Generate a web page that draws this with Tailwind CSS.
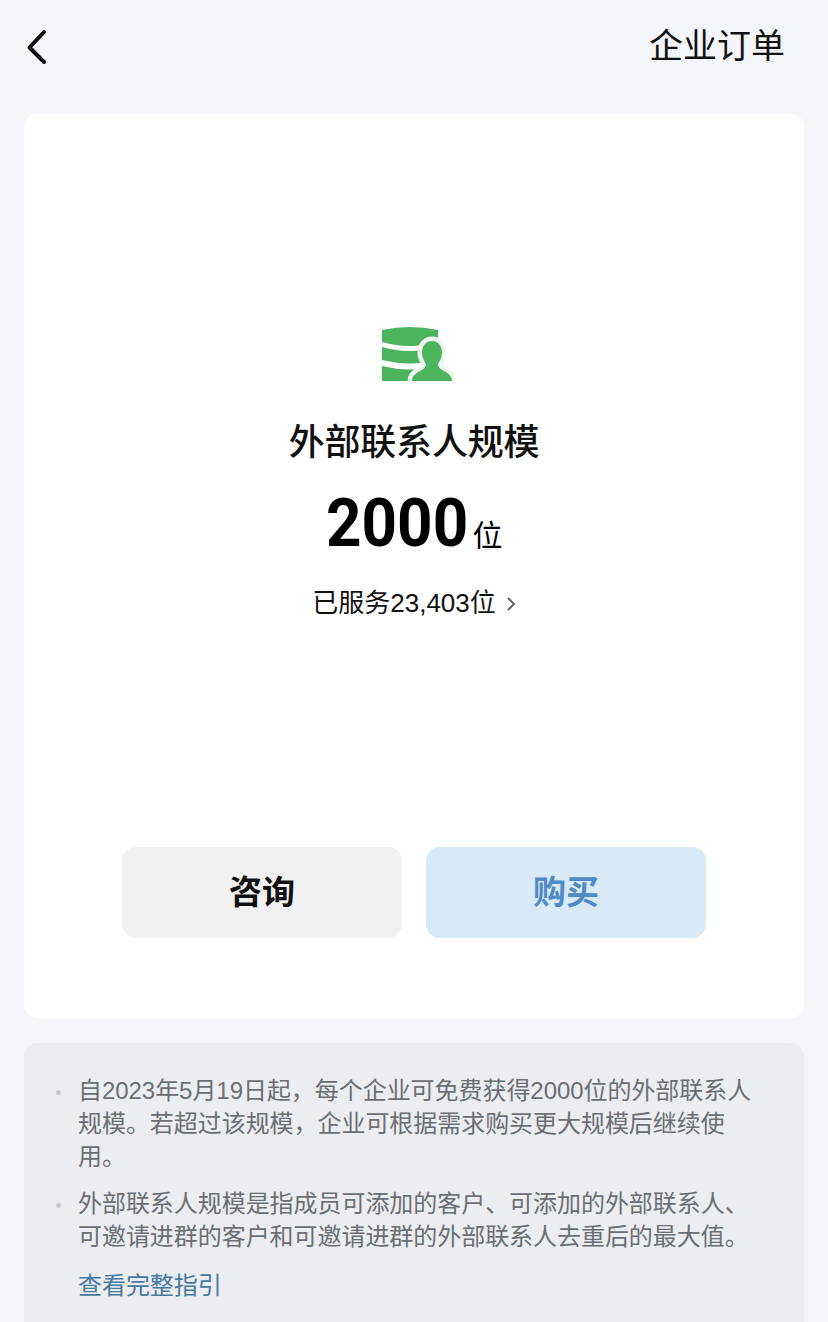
<!DOCTYPE html>
<html lang="zh">
<head>
<meta charset="utf-8">
<script src="https://cdn.jsdelivr.net/npm/@tailwindcss/browser@4"></script>
</head>
<body class="m-0">
<div class="w-[828px] h-[1322px] overflow-hidden bg-[#f3f5f8] font-['Liberation_Sans','Noto_Sans_CJK_SC',sans-serif] flex flex-col">
  <header class="h-[114px] shrink-0 flex items-start justify-between pl-[26px] pr-[43px] pt-[26px]">
    <svg class="mt-[3px]" width="22" height="36" viewBox="0 0 22 36" fill="none"><path d="M18 3 L3.5 18.5 L18 33" stroke="#0d0d0d" stroke-width="4" stroke-linecap="round" stroke-linejoin="round"/></svg>
    <span class="text-[34px] leading-[40px] text-[#111]">企业订单</span>
  </header>

  <main class="mx-[24px] h-[904px] shrink-0 rounded-[14px] bg-white flex flex-col items-center pt-[212px]">
    <svg class="ml-[6px]" width="72" height="56" viewBox="0 0 72 56">
      <path fill="#4cb45c" d="M1 4 Q29 -2 57 4 V16 Q29 24 1 16 Z"/>
      <path fill="#4cb45c" d="M1 21 Q29 29 57 21 V34 Q29 41 1 34 Z"/>
      <path fill="#4cb45c" d="M1 40 Q29 47 57 40 V55 H1 Z"/>
      <path fill="#4cb45c" stroke="#eef8f0" stroke-width="9" paint-order="stroke" stroke-linejoin="round" d="M51 15 C58 15 61 21 61 27 C61 32 58 36 57 38 C57 41 59 43 63 45 C67 47 71 50 71 55 H31 C31 50 35 47 39 45 C43 43 45 41 45 38 C44 36 41 32 41 27 C41 21 44 15 51 15 Z"/>
    </svg>
    <h1 class="mt-[39px] text-[36px] leading-[44px] font-medium text-[#111] tracking-[-0.2px]">外部联系人规模</h1>
    <div class="mt-[15px] flex items-baseline h-[86px] text-black">
      <span class="inline-block w-[147px] origin-left scale-x-[0.925] whitespace-nowrap font-['Roboto',sans-serif] text-[67px] leading-[86px] font-bold">2000</span>
      <span class="text-[30px] leading-[36px]">位</span>
    </div>
    <div class="mt-[20px] flex items-center text-[26px] leading-[34px] text-[#111]">
      <span>已服务23,403位</span>
      <svg class="ml-[10px] mt-[1px]" width="10" height="16" viewBox="0 0 10 16" fill="none"><path d="M2 2 L8 8 L2 14" stroke="#666" stroke-width="2"/></svg>
    </div>
    <div class="mt-[227px] flex gap-[24px]">
      <button class="w-[280px] h-[91px] rounded-[14px] bg-[#f1f1f1] text-[33px] font-bold text-[#111]">咨询</button>
      <button class="w-[280px] h-[91px] rounded-[14px] bg-[#d8e9f7] text-[33px] font-bold text-[#4f8ac4]">购买</button>
    </div>
  </main>

  <section class="mx-[24px] mt-[25px] grow rounded-t-[14px] bg-[#ebedf0] pl-[54px] pt-[31px] text-[24px] leading-[33px] tracking-[-0.05px] text-[#6b6e72]">
    <div class="relative">
      <span class="absolute left-[-22px] top-[16px] size-[5px] rounded-full bg-[#c6c9cc]"></span>
      <p class="whitespace-nowrap">自2023年5月19日起，每个企业可免费获得2000位的外部联系人<br>规模。若超过该规模，企业可根据需求购买更大规模后继续使<br>用。</p>
    </div>
    <div class="relative mt-[14px]">
      <span class="absolute left-[-22px] top-[16px] size-[5px] rounded-full bg-[#c6c9cc]"></span>
      <p class="whitespace-nowrap">外部联系人规模是指成员可添加的客户、可添加的外部联系人、<br>可邀请进群的客户和可邀请进群的外部联系人去重后的最大值。</p>
    </div>
    <a class="block mt-[16px] text-[#47799f]">查看完整指引</a>
  </section>
</div>
</body>
</html>
